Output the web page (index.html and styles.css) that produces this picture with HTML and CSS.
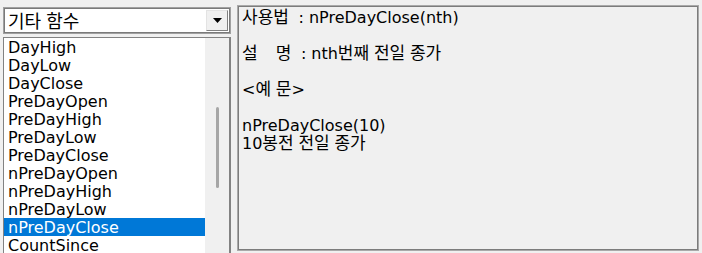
FILE: index.html
```html
<!DOCTYPE html>
<html lang="ko">
<head>
<meta charset="utf-8">
<title>함수 도움말</title>
<link rel="stylesheet" href="styles.css">
</head>
<body>
<div class="app">
  <div class="left">
    <div class="combo">
      <div class="combo-text"><span class="ko-big">기타 함수</span></div>
      <div class="combo-btn">
        <svg width="9" height="5" viewBox="0 0 9 5"><path d="M0 0H9L4.5 5Z" fill="#000"/></svg>
      </div>
    </div>
    <div class="list">
      <ul class="items">
        <li>DayHigh</li>
        <li>DayLow</li>
        <li>DayClose</li>
        <li>PreDayOpen</li>
        <li>PreDayHigh</li>
        <li>PreDayLow</li>
        <li>PreDayClose</li>
        <li>nPreDayOpen</li>
        <li>nPreDayHigh</li>
        <li>nPreDayLow</li>
        <li class="sel">nPreDayClose</li>
        <li>CountSince</li>
      </ul>
      <div class="scroll"><div class="thumb"></div></div>
    </div>
  </div>
  <div class="panel">
    <div class="para"><span class="ko">사용법</span><span class="sep">:</span>nPreDayClose(nth)</div>
    <div class="para"><span class="ko">설</span><span class="ko gap">명</span><span class="sep">:</span>nth<span class="ko">번째 전일 종가</span></div>
    <div class="para">&lt;<span class="ko">예 문</span>&gt;</div>
    <div class="para">nPreDayClose(10)<br>10<span class="ko">봉전 전일 종가</span></div>
  </div>
</div>
</body>
</html>
```

FILE: styles.css
```css
html, body {
  margin: 0;
  padding: 0;
  background: #f0f0f0;
}
body {
  width: 702px;
  height: 253px;
  overflow: hidden;
  font-family: "DejaVu Sans", "Noto Sans CJK KR", sans-serif;
  font-size: 16px;
  color: #000;
}
.app {
  display: flex;
  gap: 6px;
  padding: 5px 3px 0 3px;
  height: 253px;
  box-sizing: border-box;
}
.left {
  width: 228px;
  margin-top: 2px;
  display: flex;
  flex-direction: column;
  gap: 3px;
}
.combo {
  height: 27px;
  box-sizing: border-box;
  border: 1px solid #a0a0a0;
  box-shadow: inset 0 0 0 1px #7a7a7a;
  background: #fff;
  display: flex;
  padding: 2px;
}
.combo-text {
  flex: 1;
  padding-left: 2px;
  line-height: 21px;
  font-family: "Noto Sans CJK KR", sans-serif;
}
.ko-big {
  font-size: 18px;
}
.combo-btn {
  width: 22px;
  background: #f0f0f0;
  box-sizing: border-box;
  border-right: 1px solid #808080;
  border-bottom: 1px solid #808080;
  border-left: 1px solid #e3e3e3;
  border-top: 1px solid #e3e3e3;
  display: flex;
  align-items: center;
  justify-content: center;
}
.list {
  flex: 1;
  display: flex;
  background: #fff;
  border: 1px solid #828282;
  border-right-width: 2px;
  border-bottom: none;
}
.items {
  list-style: none;
  margin: 0;
  padding: 0;
  width: 201px;
}
.items li {
  height: 18px;
  line-height: 20px;
  padding-left: 4px;
  white-space: nowrap;
}
.items li.sel {
  background: #0078d7;
  color: #fff;
}
.scroll {
  flex: 1;
  background: #f0f0f0;
  position: relative;
}
.thumb {
  position: absolute;
  left: 11px;
  top: 69px;
  width: 3px;
  height: 81px;
  border-radius: 2px;
  background: #a6a6a6;
}
.panel {
  width: 462px;
  height: 246px;
  box-sizing: border-box;
  border: 1px solid #a9a9a9;
  box-shadow: inset 0 0 0 1px #7c7c7c;
  padding: 3px 4px 0 4px;
  line-height: 18px;
}
.para {
  margin-bottom: 18px;
  white-space: nowrap;
}
.ko {
  font-family: "Noto Sans CJK KR", sans-serif;
  font-size: 17px;
  line-height: 0;
}
.gap {
  margin-left: 18px;
}
.sep {
  display: inline-block;
  width: 20px;
  padding-right: 5px;
  box-sizing: border-box;
  text-align: right;
}
```
